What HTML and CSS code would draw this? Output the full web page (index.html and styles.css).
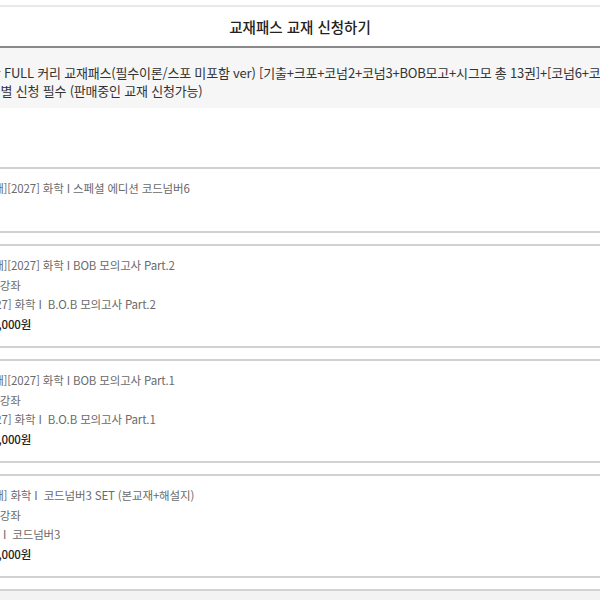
FILE: index.html
```html
<!DOCTYPE html>
<html lang="ko">
<head>
  <meta charset="UTF-8">
  <meta name="viewport" content="width=device-width, initial-scale=1.0">
  <title>교재패스 교재 신청하기</title>
  <link rel="stylesheet" href="styles.css">
</head>
<body>
  <div class="top-bar"></div>
  <div class="header">
    <h1>교재패스 교재 신청하기</h1>
  </div>
  <div class="page">
    <div class="notice">
      <p>화학 FULL 커리 교재패스(필수이론/스포 미포함 ver) [기출+크포+코넘2+코넘3+BOB모고+시그모 총 13권]+[코넘6+코넘4]</p>
      <p>교재별 신청 필수 (판매중인 교재 신청가능)</p>
    </div>

    <div class="item-list">
      <div class="item item-short">
        <div class="line">[교재][2027] 화학 I 스페셜 에디션 코드넘버6</div>
        <div class="line"></div>
      </div>
      <div class="item">
        <div class="line">[교재][2027] 화학 I BOB 모의고사 Part.2</div>
        <div class="line">연계강좌</div>
        <div class="line">[2027] 화학 I &nbsp;B.O.B 모의고사 Part.2</div>
        <div class="line price">112,000원</div>
      </div>
      <div class="item">
        <div class="line">[교재][2027] 화학 I BOB 모의고사 Part.1</div>
        <div class="line">연계강좌</div>
        <div class="line">[2027] 화학 I &nbsp;B.O.B 모의고사 Part.1</div>
        <div class="line price">112,000원</div>
      </div>
      <div class="item">
        <div class="line">[교재] 화학 I &nbsp;코드넘버3 SET (본교재+해설지)</div>
        <div class="line">연계강좌</div>
        <div class="line">화학 I &nbsp;코드넘버3</div>
        <div class="line price">112,000원</div>
      </div>
      <div class="item item-muted">
        <div class="line">&nbsp;</div>
      </div>
    </div>
  </div>
</body>
</html>
```

FILE: styles.css
```css
* { box-sizing: border-box; margin: 0; padding: 0; }
html, body { overflow: hidden; }
body {
  font-family: "Noto Sans CJK KR", "Noto Sans", sans-serif;
  background-color: #fff;
  color: #333;
  width: 600px;
  height: 600px;
}
.top-bar {
  height: 7px;
  border-bottom: 2px solid #e9e9e9;
}
.header {
  height: 41px;
  display: flex;
  align-items: center;
  justify-content: center;
  border-bottom: 2px solid #8a8a8a;
}
.header h1 {
  font-size: 14.5px;
  font-weight: 500;
  color: #222;
}
/* the list is wider than the window and slides to the left */
.page {
  width: 760px;
  margin-left: -43px;
}
.notice {
  background-color: #f6f6f6;
  padding: 16px 20px 8px;
  font-size: 13px;
  letter-spacing: -0.2px;
  line-height: 18px;
  color: #333;
  white-space: nowrap;
}
.item-list {
  display: flex;
  flex-direction: column;
  gap: 11px;
  padding-top: 59px;
}
.item {
  border: 2px solid #d2d2d2;
  padding: 10px 20px 12px;
  background-color: #fff;
}
.item-short { padding-bottom: 13px; }
.item-muted { background-color: #f3f3f3; }
.line {
  font-size: 11.5px;
  letter-spacing: -0.15px;
  line-height: 19.5px;
  min-height: 19.5px;
  color: #6a6a6a;
  white-space: nowrap;
}
.line.price {
  color: #222;
  font-weight: 500;
}
```
